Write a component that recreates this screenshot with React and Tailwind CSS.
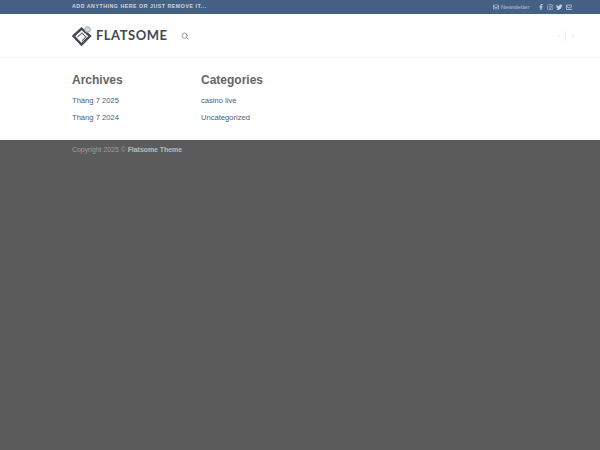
import { FaFacebookF, FaInstagram, FaRegEnvelope, FaTwitter } from 'react-icons/fa';
import { Search } from 'lucide-react';

function Logo() {
  return (
    <svg width="22" height="22" viewBox="0 0 22 22" fill="none" className="shrink-0">
      <path d="M2.5 11 L10.5 3.5 L19 11 L10.5 19.5 Z" stroke="#414a54" strokeWidth="2.4" />
      <path d="M6.5 12 L11 8 L15 12 L11 16" stroke="#6a727a" strokeWidth="1.1" />
      <circle cx="16.5" cy="4.5" r="2.8" fill="#d5d9dc" stroke="#9aa2a9" strokeWidth="1" />
    </svg>
  );
}

function WidgetColumn({ title, links, width }) {
  return (
    <div className={width}>
      <h3 className="text-[12px] leading-[15px] font-bold text-[#666]">{title}</h3>
      <ul className="mt-[6px]">
        {links.map((link) => (
          <li key={link} className="h-[17px] text-[7.6px] leading-[14px] text-[#4c6079]">{link}</li>
        ))}
      </ul>
    </div>
  );
}

export default function App() {
  return (
    <div className="flex h-[450px] w-[600px] flex-col overflow-hidden bg-[#5b5b5b] font-['Liberation_Sans',sans-serif]">
      <div className="flex h-[14px] items-center justify-between bg-[#446084] pl-[72px] pr-[28px]">
        <span className="text-[5.3px] font-bold tracking-[0.5px] text-white/75 uppercase">Add anything here or just remove it...</span>
        <div className="flex items-center text-white/70">
          <FaRegEnvelope size={6} />
          <span className="ml-[2px] text-[6.1px] text-white/55">Newsletter</span>
          <FaFacebookF size={6} className="ml-[8px]" />
          <FaInstagram size={6.5} className="ml-[3px]" />
          <FaTwitter size={6.5} className="ml-[3px]" />
          <FaRegEnvelope size={6.5} className="ml-[3px]" />
        </div>
      </div>

      <div className="flex h-[44px] items-center justify-between border-b border-[#f4f4f4] bg-white pl-[71px] pr-[26px]">
        <div className="flex items-center">
          <Logo />
          <span className="ml-[3px] font-['Lato',sans-serif] text-[13px] font-bold tracking-[0.5px] text-[#414a54]">FLATSOME</span>
          <Search size={8} strokeWidth={3} className="ml-[14px] text-[#999]" />
        </div>
        <div className="flex items-center text-[5px] text-[#ccc]">
          <span>‹</span>
          <span className="mx-[6px] h-[12px] w-px bg-[#f0f0f0]" />
          <span>›</span>
        </div>
      </div>

      <div className="flex h-[82px] bg-white pt-[15px] pl-[72px]">
        <WidgetColumn title="Archives" links={['Tháng 7 2025', 'Tháng 7 2024']} width="w-[129px]" />
        <WidgetColumn title="Categories" links={['casino live', 'Uncategorized']} width="w-[129px]" />
      </div>

      <div className="pt-[6px] pl-[72px] text-[6.9px] leading-[8px] text-white/40">
        Copyright 2025 © <span className="font-bold text-white/60">Flatsome Theme</span>
      </div>
    </div>
  );
}
